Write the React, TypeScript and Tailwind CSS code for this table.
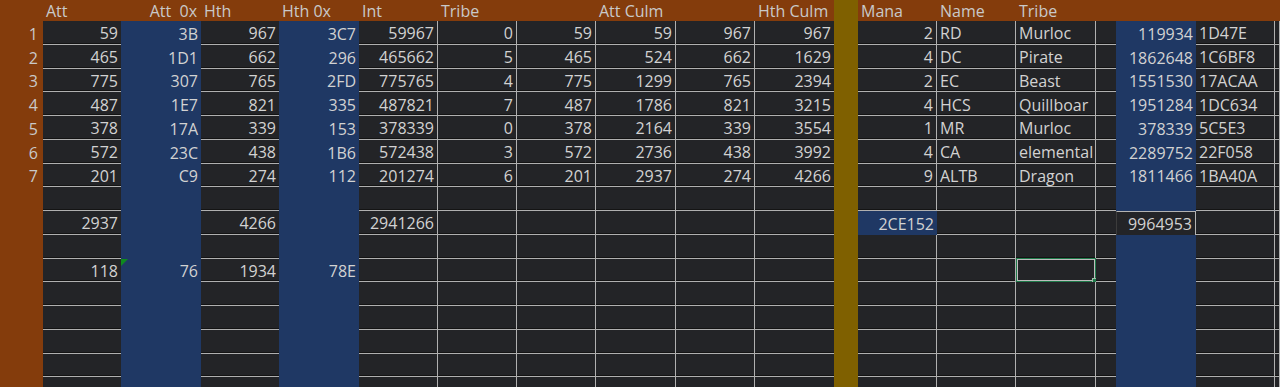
import React from "react"

// column indexes: 0 row no, 1..10 left block, 11 divider, 12..18 right block
const BLUE_COLS = [2, 4, 16]
const LEFT_ALIGNED = [13, 14, 17]
const NO_RIGHT_LINE = [1, 3, 10, 15]

const HEADERS = [
  "",
  "Att",
  "Att  0x",
  "Hth",
  "Hth 0x",
  "Int",
  "Tribe",
  "",
  "Att Culm",
  "",
  "Hth Culm",
  "",
  "Mana",
  "Name",
  "Tribe",
  "",
  "",
  "",
  "",
]

const minions = [
  ["59", "3B", "967", "3C7", "59967", "0", "59", "59", "967", "967", "2", "RD", "Murloc", "119934", "1D47E"],
  ["465", "1D1", "662", "296", "465662", "5", "465", "524", "662", "1629", "4", "DC", "Pirate", "1862648", "1C6BF8"],
  ["775", "307", "765", "2FD", "775765", "4", "775", "1299", "765", "2394", "2", "EC", "Beast", "1551530", "17ACAA"],
  ["487", "1E7", "821", "335", "487821", "7", "487", "1786", "821", "3215", "4", "HCS", "Quillboar", "1951284", "1DC634"],
  ["378", "17A", "339", "153", "378339", "0", "378", "2164", "339", "3554", "1", "MR", "Murloc", "378339", "5C5E3"],
  ["572", "23C", "438", "1B6", "572438", "3", "572", "2736", "438", "3992", "4", "CA", "elemental", "2289752", "22F058"],
  ["201", "C9", "274", "112", "201274", "6", "201", "2937", "274", "4266", "9", "ALTB", "Dragon", "1811466", "1BA40A"],
]

const buildRows = () => {
  const rows: string[][] = []
  rows.push(HEADERS)
  minions.forEach((m, i) => {
    rows.push([
      String(i + 1),
      ...m.slice(0, 10),
      "",
      m[10],
      m[11],
      m[12],
      "",
      m[13],
      m[14],
      "",
    ])
  })
  for (let i = 8; i <= 16; i++) rows.push(Array(19).fill(""))
  rows[9][1] = "2937"
  rows[9][3] = "4266"
  rows[9][5] = "2941266"
  rows[9][12] = "2CE152"
  rows[9][16] = "9964953"
  rows[11][1] = "118"
  rows[11][2] = "76"
  rows[11][3] = "1934"
  rows[11][4] = "78E"
  return rows
}

const Cell = ({ r, c, value }: { r: number; c: number; value: string }) => {
  const align = LEFT_ALIGNED.includes(c) ? "justify-start pl-[3px]" : "justify-end pr-[3px]"

  if (c === 11) return <div className="bg-[#7f6000]" />

  if (c === 0)
    return (
      <div className="flex items-center justify-end bg-[#843c0c] pr-[5px] pt-[2px] text-[#c9c9c9]">
        {value}
      </div>
    )

  if (r === 0)
    return (
      <div
        className={`flex items-center whitespace-pre bg-[#843c0c] text-[#c9c9c9] ${
          c === 2 ? "justify-end pr-[4px]" : "justify-start pl-[3px]"
        }`}
      >
        {value}
      </div>
    )

  const isTotalCell = r === 9 && c === 16
  const isBlue = (BLUE_COLS.includes(c) && !isTotalCell) || (r === 9 && c === 12)

  if (isBlue)
    return (
      <div className={`relative flex items-center bg-[#1f3864] pt-[2px] text-[#d2d2d2] ${align}`}>
        {value}
        {r === 11 && c === 2 && (
          <span className="absolute left-0 top-0 h-0 w-0 border-r-[7px] border-t-[7px] border-r-transparent border-t-[#0e8a1e]" />
        )}
      </div>
    )

  if (isTotalCell)
    return (
      <div className="flex items-center justify-end border-t border-r border-l border-t-[#b3b3b3] border-r-[#b3b3b3] border-l-[#3c3c3c] bg-[#232427] pr-[3px] pt-[2px] text-[#d2d2d2]">
        {value}
      </div>
    )

  const selected = r === 11 && c === 14

  return (
    <div
      className={`relative flex items-center border-b border-[#b0b0b0] bg-[#232427] pt-[2px] text-[#d2d2d2] shadow-[inset_0_-1px_0_#141414] ${
        NO_RIGHT_LINE.includes(c) ? "" : "border-r"
      } ${align}`}
    >
      {value}
      {selected && (
        <>
          <span className="absolute -top-px left-0 -right-px -bottom-px border border-[#1f7a4a] shadow-[inset_0_0_0_1px_#bdbdbd]" />
          <span className="absolute -right-[3px] -bottom-[3px] h-[6px] w-[6px] border border-[#9fbfa9] bg-[#1f7a4a]" />
        </>
      )}
    </div>
  )
}

export default function App() {
  const rows = buildRows()

  return (
    <div
      className="h-[387px] w-[1280px] overflow-hidden bg-[#232427] text-[16px] leading-none"
      style={{ fontFamily: '"Open Sans", "Liberation Sans", sans-serif' }}
    >
      <div className="grid grid-cols-[43px_78px_80px_78px_80px_79px_79px_79px_80px_79px_79px_24px_79px_79px_80px_20px_80px_79px_5px] grid-rows-[21px_repeat(16,23.75px)]">
        {rows.map((row, r) =>
          row.map((value, c) => <Cell key={`${r}-${c}`} r={r} c={c} value={value} />),
        )}
      </div>
    </div>
  )
}
